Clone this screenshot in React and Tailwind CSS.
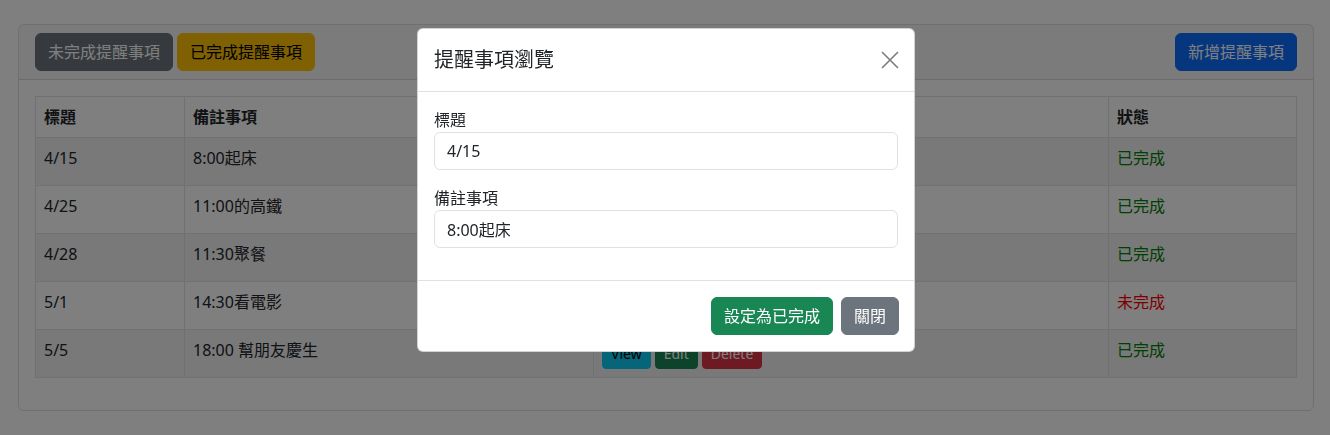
import React from 'react';

const rows = [
  { title: '4/15', note: '8:00起床', done: true },
  { title: '4/25', note: '11:00的高鐵', done: true },
  { title: '4/28', note: '11:30聚餐', done: true },
  { title: '5/1', note: '14:30看電影', done: false },
  { title: '5/5', note: '18:00 幫朋友慶生', done: true },
];

const font = "font-[Noto_Sans,Noto_Sans_CJK_TC,sans-serif]";

const ReminderTable = () => (
  <table className="w-full border-collapse text-base leading-6 text-[#212529]">
    <thead>
      <tr>
        <th className="w-[149px] border border-[#dee2e6] p-2 text-left font-bold">標題</th>
        <th className="w-[409px] border border-[#dee2e6] p-2 text-left font-bold">備註事項</th>
        <th className="w-[515px] border border-[#dee2e6] p-2 text-left font-bold">操作</th>
        <th className="border border-[#dee2e6] p-2 text-left font-bold">狀態</th>
      </tr>
    </thead>
    <tbody>
      {rows.map((row, i) => (
        <tr key={row.title} className={i % 2 === 0 ? 'bg-black/5' : ''}>
          <td className="border border-[#dee2e6] p-2 align-top">{row.title}</td>
          <td className="border border-[#dee2e6] p-2 align-top">{row.note}</td>
          <td className="border border-[#dee2e6] p-2 align-top">
            <div className="flex gap-1">
              <button className="h-[31px] rounded border border-[#0dcaf0] bg-[#0dcaf0] px-2 text-sm text-black">View</button>
              <button className="h-[31px] rounded border border-[#198754] bg-[#198754] px-2 text-sm text-white">Edit</button>
              <button className="h-[31px] rounded border border-[#dc3545] bg-[#dc3545] px-2 text-sm text-white">Delete</button>
            </div>
          </td>
          <td className={`border border-[#dee2e6] p-2 align-top ${row.done ? 'text-[#008000]' : 'text-[#ff0000]'}`}>
            {row.done ? '已完成' : '未完成'}
          </td>
        </tr>
      ))}
    </tbody>
  </table>
);

const ViewModal = () => (
  <div className="fixed inset-0 flex justify-center">
    <div className="mt-[28px] ml-[2px] h-fit w-[498px] rounded-md border border-black/[0.175] bg-white">
      {/* header */}
      <div className="flex items-center justify-between border-b border-[#dee2e6] p-4">
        <h5 className="text-xl leading-[30px] font-normal text-[#212529]">提醒事項瀏覽</h5>
        <button className="mr-[-1px] flex h-[18px] w-[18px] items-center justify-center opacity-50">
          <svg width="18" height="18" viewBox="0 0 18 18" fill="none" stroke="#000" strokeWidth="1.7">
            <path d="M1 1 17 17M17 1 1 17" />
          </svg>
        </button>
      </div>

      {/* body */}
      <div className="p-4 text-[#212529]">
        <div className="mb-4">
          <label className="block text-base leading-6">標題</label>
          <input
            readOnly
            value="4/15"
            className="block h-[38px] w-full rounded-md border border-[#dee2e6] px-3 text-base text-[#212529] outline-none"
          />
        </div>
        <div className="mb-4">
          <label className="block text-base leading-6">備註事項</label>
          <input
            readOnly
            value="8:00起床"
            className="block h-[38px] w-full rounded-md border border-[#dee2e6] px-3 text-base text-[#212529] outline-none"
          />
        </div>
      </div>

      {/* footer */}
      <div className="flex justify-end gap-2 border-t border-[#dee2e6] px-[15px] py-4">
        <button className="h-[38px] rounded-md border border-[#198754] bg-[#198754] px-3 text-base text-white">設定為已完成</button>
        <button className="h-[38px] rounded-md border border-[#6c757d] bg-[#6c757d] px-3 text-base text-white">關閉</button>
      </div>
    </div>
  </div>
);

export default function App() {
  return (
    <div className={`relative h-[435px] overflow-hidden bg-white ${font}`}>
      <div className="ml-[18px] mr-[16px] pt-[24px]">
        <div className="rounded-md border border-black/[0.125]">
          <div className="flex justify-between border-b border-black/[0.125] bg-black/[0.03] px-4 py-2">
            <div className="flex gap-1">
              <button className="h-[38px] rounded-md border border-[#6c757d] bg-[#6c757d] px-3 text-base text-white">未完成提醒事項</button>
              <button className="h-[38px] rounded-md border border-[#ffc107] bg-[#ffc107] px-3 text-base text-black">已完成提醒事項</button>
            </div>
            <button className="h-[38px] rounded-md border border-[#0d6efd] bg-[#0d6efd] px-3 text-base text-white">新增提醒事項</button>
          </div>
          <div className="p-4 pb-[32px]">
            <ReminderTable />
          </div>
        </div>
      </div>

      {/* backdrop */}
      <div className="fixed inset-0 bg-black/50" />
      <ViewModal />
    </div>
  );
}
